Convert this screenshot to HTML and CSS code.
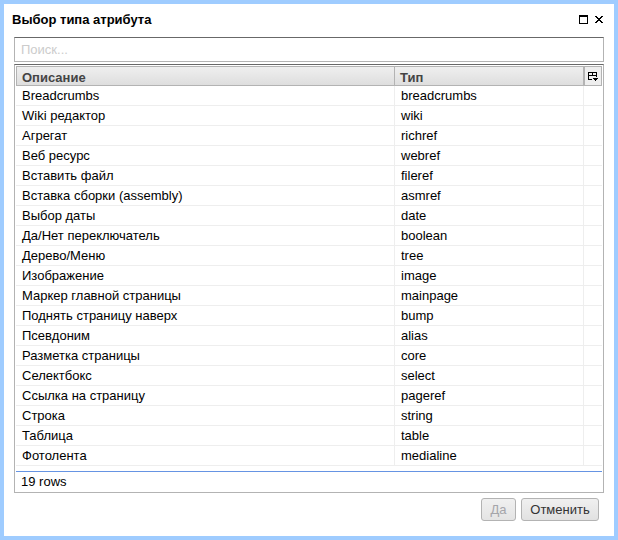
FILE: index.html
```html
<!DOCTYPE html>
<html lang="ru">
<head>
<meta charset="utf-8">
<title>Выбор типа атрибута</title>
<link rel="stylesheet" href="styles.css">
</head>
<body>
<div class="window">
  <header class="caption">
    <h1>Выбор типа атрибута</h1>
    <svg class="control" width="9" height="9" viewBox="0 0 9 9" shape-rendering="crispEdges"><path d="M0 0h9v9H0zM1 2v6h7V2z" fill="#000" fill-rule="evenodd"/></svg>
    <svg class="control" width="8" height="7" viewBox="0 0 8 7" shape-rendering="crispEdges"><path d="M0 0h2v1h1v1h2v-1h1v-1h2v1h-1v1h-1v1h-1v1h1v1h1v1h1v1h-2v-1h-1v-1h-2v1h-1v1h-2v-1h1v-1h1v-1h1v-1h-1v-1h-1v-1h-1z" fill="#000"/></svg>
  </header>
  <input class="search" type="text" placeholder="Поиск...">
  <div class="panel">
    <div class="row head">
      <div>Описание</div><div>Тип</div>
      <div class="menu"><svg width="10" height="9" viewBox="0 0 10 9" shape-rendering="crispEdges"><path d="M0 0h9v5H8V4H1v3h3v1H0zM1 1v2h3V1zM5 1v2h3V1zM5 6h5v1H9v1H8v1H7V8H6V7H5z" fill="#000" fill-rule="evenodd"/></svg></div>
    </div>
    <div class="rows">
      <div class="row"><div>Breadcrumbs</div><div>breadcrumbs</div><div></div></div>
      <div class="row"><div>Wiki редактор</div><div>wiki</div><div></div></div>
      <div class="row"><div>Агрегат</div><div>richref</div><div></div></div>
      <div class="row"><div>Веб ресурс</div><div>webref</div><div></div></div>
      <div class="row"><div>Вставить файл</div><div>fileref</div><div></div></div>
      <div class="row"><div>Вставка сборки (assembly)</div><div>asmref</div><div></div></div>
      <div class="row"><div>Выбор даты</div><div>date</div><div></div></div>
      <div class="row"><div>Да/Нет переключатель</div><div>boolean</div><div></div></div>
      <div class="row"><div>Дерево/Меню</div><div>tree</div><div></div></div>
      <div class="row"><div>Изображение</div><div>image</div><div></div></div>
      <div class="row"><div>Маркер главной страницы</div><div>mainpage</div><div></div></div>
      <div class="row"><div>Поднять страницу наверх</div><div>bump</div><div></div></div>
      <div class="row"><div>Псевдоним</div><div>alias</div><div></div></div>
      <div class="row"><div>Разметка страницы</div><div>core</div><div></div></div>
      <div class="row"><div>Селектбокс</div><div>select</div><div></div></div>
      <div class="row"><div>Ссылка на страницу</div><div>pageref</div><div></div></div>
      <div class="row"><div>Строка</div><div>string</div><div></div></div>
      <div class="row"><div>Таблица</div><div>table</div><div></div></div>
      <div class="row"><div>Фотолента</div><div>medialine</div><div></div></div>
    </div>
    <div class="status">19 rows</div>
  </div>
  <footer class="actions">
    <button class="ok" disabled>Да</button>
    <button class="cancel">Отменить</button>
  </footer>
</div>
</body>
</html>
```
FILE: styles.css
```css
* {
  box-sizing: border-box;
}

body {
  margin: 0;
  font: 13px/15px "Liberation Sans", Arial, sans-serif;
  color: #000;
}

.window {
  display: flex;
  flex-direction: column;
  width: 618px;
  height: 540px;
  padding: 0 10px;
  border: 4px solid #9fccff;
  background: #fff;
}

.caption {
  display: flex;
  align-items: center;
  gap: 7px;
  height: 31px;
  margin: 0 1px 2px -2px;
}

.caption h1 {
  flex: 1;
  margin: 0;
  font-size: 13px;
  line-height: 15px;
}

.search {
  height: 25px;
  padding: 0 6px;
  border: 1px solid #b3b3b3;
  border-top-color: #686868;
  border-radius: 0;
  outline: none;
  background: #fff;
  font: inherit;
}

.search::placeholder {
  color: #ccc;
}

.panel {
  height: 429px;
  margin-top: 2px;
  padding: 1px;
  border: 1px solid #b3b3b3;
  border-top-color: #686868;
}

.row {
  display: grid;
  grid-template-columns: 379px 189px 18px;
  height: 20px;
}

.row > div {
  padding: 2px 6px;
  border-right: 1px solid #eee;
  border-bottom: 1px solid #eee;
}

.row > div:last-child {
  border-right: 0;
}

.head {
  border: 1px solid #b3b3b3;
  border-width: 1px 0 1px 1px;
  grid-template-columns: 378px 189px 18px;
  grid-template-rows: 18px;
  background: linear-gradient(#efefef, #dedede);
  color: #444;
  font-weight: bold;
}

.head > div {
  padding: 3px 5px 0;
  border-bottom: 0;
  border-right-color: #b3b3b3;
}

.head > .menu {
  padding: 5px 0 0 3px;
  border-left: 1px solid #b3b3b3;
  background: #eee;
}

.head > .menu:last-child {
  border-right: 1px solid #b3b3b3;
}

.menu svg {
  display: block;
}

.rows {
  height: 385px;
}

.status {
  padding: 2px 5px;
  border-top: 1px solid #6694e3;
}

.actions {
  display: flex;
  justify-content: flex-end;
  gap: 5px;
  padding: 5px 5px 0 0;
}

.actions button {
  height: 23px;
  padding: 0;
  border: 1px solid #b3b3b3;
  border-radius: 3px;
  background: linear-gradient(#f0f0f0, #e1e1e1);
  color: #333;
  font: inherit;
}

.actions .ok {
  width: 35px;
  background: linear-gradient(#f0f0f0, #e4e4e4);
  color: #a5a5aa;
}

.actions .cancel {
  width: 78px;
}
```
